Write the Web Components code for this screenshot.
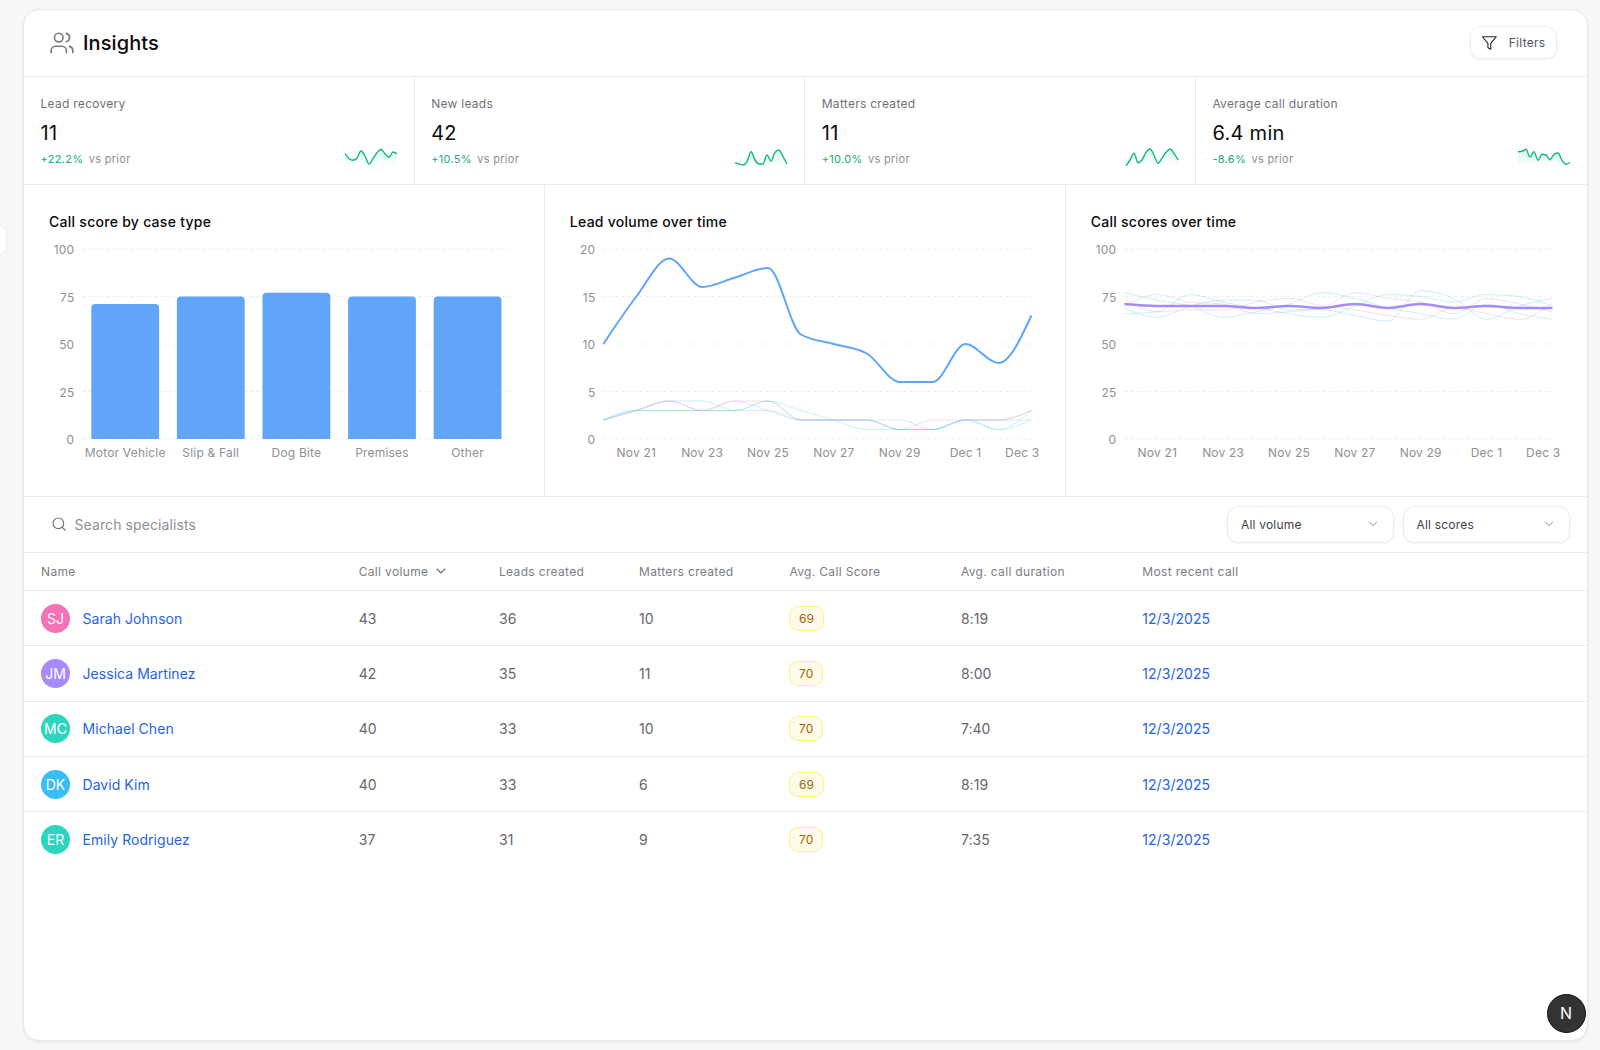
<!DOCTYPE html>
<html lang="en">
<head>
<meta charset="utf-8">
<title>Insights</title>
<style>
  html, body { margin: 0; height: 100%; }
  body { background: #f7f7f7; font-family: Inter, "Liberation Sans", sans-serif; overflow: hidden; }
</style>
</head>
<body>
<side-tab></side-tab>
<insights-page>
  <insights-header slot="header"></insights-header>
  <stat-row slot="stats">
    <stat-card label="Lead recovery" value="11" delta="+22.2%" spark="4.7,9.7,11.3,9,2,7,15,9.7,3.7,0.3,4.7,8.3,3,4.7"></stat-card>
    <stat-card label="New leads" value="42" delta="+10.5%" spark="13.7,15,16,12.7,2.7,11,15,15,6,12,3.3,1,7.7,15"></stat-card>
    <stat-card label="Matters created" value="11" delta="+10.0%" spark="16.7,11,4.3,13.7,11,3.3,0,6,14.3,9.3,3.3,0,4.3,11"></stat-card>
    <stat-card label="Average call duration" value="6.4 min" delta="-8.6%" spark="2.7,2.3,0.3,8,2.7,11.3,5.3,6,10.7,5.3,4,11.3,15.3,13.3"></stat-card>
  </stat-row>
  <chart-row slot="charts">
    <chart-panel heading="Call score by case type"><bar-chart></bar-chart></chart-panel>
    <chart-panel heading="Lead volume over time"><line-chart kind="leads"></line-chart></chart-panel>
    <chart-panel heading="Call scores over time"><line-chart kind="scores"></line-chart></chart-panel>
  </chart-row>
  <search-bar slot="search">
    <select-box label="All volume"></select-box>
    <select-box label="All scores"></select-box>
  </search-bar>
  <specialist-table slot="table">
    <specialist-row name="Sarah Johnson" initials="SJ" color="#f472b6" volume="43" leads="36" matters="10" score="69" duration="8:19" recent="12/3/2025"></specialist-row>
    <specialist-row name="Jessica Martinez" initials="JM" color="#a78bfa" volume="42" leads="35" matters="11" score="70" duration="8:00" recent="12/3/2025"></specialist-row>
    <specialist-row name="Michael Chen" initials="MC" color="#2dd4bf" volume="40" leads="33" matters="10" score="70" duration="7:40" recent="12/3/2025"></specialist-row>
    <specialist-row name="David Kim" initials="DK" color="#38bdf8" volume="40" leads="33" matters="6" score="69" duration="8:19" recent="12/3/2025"></specialist-row>
    <specialist-row name="Emily Rodriguez" initials="ER" color="#2dd4bf" volume="37" leads="31" matters="9" score="70" duration="7:35" recent="12/3/2025"></specialist-row>
  </specialist-table>
</insights-page>
<dev-badge></dev-badge>

<script>
// d3 style monotoneX curve, same shape the charts in the reference use
function monotonePath(pts) {
  const n = pts.length;
  const dx = [], m = [], t = [];
  for (let i = 0; i < n - 1; i++) {
    dx[i] = pts[i + 1][0] - pts[i][0];
    m[i] = (pts[i + 1][1] - pts[i][1]) / dx[i];
  }
  for (let i = 1; i < n - 1; i++) {
    const p = (m[i - 1] * dx[i] + m[i] * dx[i - 1]) / (dx[i - 1] + dx[i]);
    const s = (Math.sign(m[i - 1]) + Math.sign(m[i])) * Math.min(Math.abs(m[i - 1]), Math.abs(m[i]), 0.5 * Math.abs(p));
    t[i] = s || 0;
  }
  t[0] = (3 * m[0] - t[1]) / 2;
  t[n - 1] = (3 * m[n - 2] - t[n - 2]) / 2;
  let d = 'M' + pts[0][0].toFixed(2) + ',' + pts[0][1].toFixed(2);
  for (let i = 0; i < n - 1; i++) {
    const h = dx[i] / 3;
    d += 'C' + (pts[i][0] + h).toFixed(2) + ',' + (pts[i][1] + h * t[i]).toFixed(2) + ' ' +
      (pts[i + 1][0] - h).toFixed(2) + ',' + (pts[i + 1][1] - h * t[i + 1]).toFixed(2) + ' ' +
      pts[i + 1][0].toFixed(2) + ',' + pts[i + 1][1].toFixed(2);
  }
  return d;
}

// plot geometry shared by the three charts
const PLOT = { left: 33.4, right: 461.4, top: 9, bottom: 199, width: 472, height: 232 };
const AXIS_STYLE = `
  :host { display: block; }
  svg { display: block; overflow: visible; }
  text { font: 12px Inter, "Liberation Sans", sans-serif; fill: #8f8f94; letter-spacing: .2px; }
  .grid { stroke: #eeeeee; stroke-dasharray: 3 3; }
`;

function yAxis(ticks, max) {
  return ticks.map(v => {
    const y = PLOT.bottom - (v / max) * (PLOT.bottom - PLOT.top);
    return `<line class="grid" x1="${PLOT.left}" x2="${PLOT.right}" y1="${y}" y2="${y}"/>
      <text x="${PLOT.left - 8}" y="${y + 5}" text-anchor="end">${v}</text>`;
  }).join('');
}

function shadow(el, html) {
  el.attachShadow({ mode: 'open' }).innerHTML = html;
}

class SideTab extends HTMLElement {
  constructor() {
    super();
    shadow(this, `<style>
      :host { position: absolute; left: -10px; top: 225px; width: 16px; height: 30px; background: #fff; border-radius: 8px; box-shadow: 0 0 2px rgba(0,0,0,.1); }
    </style>`);
  }
}

class InsightsPage extends HTMLElement {
  constructor() {
    super();
    shadow(this, `<style>
      :host { display: block; box-sizing: border-box; padding: 9px 12.5px 9px 23px; height: 100%; }
      .card { box-sizing: border-box; height: 100%; background: #fff; border: 1px solid #e8e8e8; border-radius: 16px; box-shadow: 0 1px 3px rgba(0,0,0,.07); overflow: hidden; }
    </style>
    <div class="card">
      <slot name="header"></slot>
      <slot name="stats"></slot>
      <slot name="charts"></slot>
      <slot name="search"></slot>
      <slot name="table"></slot>
    </div>`);
  }
}

class InsightsHeader extends HTMLElement {
  constructor() {
    super();
    shadow(this, `<style>
      :host { display: flex; box-sizing: border-box; height: 67px; align-items: center; justify-content: space-between; padding: 0 30px 0 25px; border-bottom: 1px solid #ebebeb; }
      .title { display: flex; align-items: center; gap: 8px; font-size: 20px; font-weight: 500; letter-spacing: .1px; color: #0a0a0a; }
      .users { width: 26px; height: 26px; color: #7a7a80; }
      button { display: flex; align-items: center; gap: 11.5px; box-sizing: border-box; height: 33px; width: 87px; margin-bottom: 1px; padding: 0 10px; font: 12px Inter, "Liberation Sans", sans-serif; letter-spacing: .3px; color: #52525b; background: #fff; border: 1px solid #ececec; border-radius: 10px; box-shadow: 0 1px 2px rgba(0,0,0,.05); }
      button svg { width: 18px; height: 18px; color: #27272a; }
    </style>
    <div class="title">
      <svg class="users" viewBox="0 0 24 24" fill="none" stroke="currentColor" stroke-width="1.5" stroke-linecap="round" stroke-linejoin="round"><path d="M16 21v-2a4 4 0 0 0-4-4H6a4 4 0 0 0-4 4v2"/><circle cx="9" cy="7" r="4"/><path d="M22 21v-2a4 4 0 0 0-3-3.87"/><path d="M16 3.13a4 4 0 0 1 0 7.75"/></svg>
      <span>Insights</span>
    </div>
    <button>
      <svg viewBox="0 0 24 24" fill="none" stroke="currentColor" stroke-width="1.6" stroke-linecap="round" stroke-linejoin="round"><polygon points="22 3 2 3 10 12.46 10 19 14 21 14 12.46 22 3"/></svg>
      <span>Filters</span>
    </button>`);
  }
}

class StatRow extends HTMLElement {
  constructor() {
    super();
    shadow(this, `<style>
      :host { display: grid; grid-template-columns: repeat(4, 1fr); height: 108px; box-sizing: border-box; border-bottom: 1px solid #ebebeb; }
    </style><slot></slot>`);
  }
}

class StatCard extends HTMLElement {
  constructor() {
    super();
    const ys = this.getAttribute('spark').split(',').map(Number);
    const pts = ys.map((y, i) => [1 + i * 4, y + 1]);
    const line = monotonePath(pts);
    const id = 'g' + Math.random().toString(36).slice(2);
    shadow(this, `<style>
      :host { display: flex; justify-content: space-between; align-items: flex-end; box-sizing: border-box; padding: 19px 16px 18px 16.5px; border-right: 1px solid #ebebeb; }
      :host(:last-child) { border-right: 0; }
      .label { font-size: 12px; line-height: 16px; letter-spacing: .28px; color: #71717a; }
      .value { font-size: 20px; line-height: 28px; margin-top: 7px; letter-spacing: .3px; color: #0a0a0a; }
      .delta { font-size: 11px; line-height: 14px; margin-top: 5px; letter-spacing: .3px; color: #8f8f94; }
      .delta b { font-weight: 400; color: #1aa874; margin-right: 2px; }
      svg { display: block; width: 54px; height: 18px; overflow: visible; }
    </style>
    <div>
      <div class="label">${this.getAttribute('label')}</div>
      <div class="value">${this.getAttribute('value')}</div>
      <div class="delta"><b>${this.getAttribute('delta')}</b> vs prior</div>
    </div>
    <svg viewBox="0 0 54 18">
      <defs><linearGradient id="${id}" x1="0" y1="0" x2="0" y2="1"><stop offset="0" stop-color="#10b981" stop-opacity=".16"/><stop offset="1" stop-color="#10b981" stop-opacity="0"/></linearGradient></defs>
      <path d="${line}L53,18L1,18Z" fill="url(#${id})"/>
      <path d="${line}" fill="none" stroke="#10b981" stroke-width="1.4"/>
    </svg>`);
  }
}

class ChartRow extends HTMLElement {
  constructor() {
    super();
    shadow(this, `<style>
      :host { display: grid; grid-template-columns: repeat(3, 1fr); height: 312px; box-sizing: border-box; border-bottom: 1px solid #ebebeb; }
    </style><slot></slot>`);
  }
}

class ChartPanel extends HTMLElement {
  constructor() {
    super();
    shadow(this, `<style>
      :host { display: block; box-sizing: border-box; padding: 27px 0 0 25px; border-right: 1px solid #ebebeb; }
      :host(:last-child) { border-right: 0; }
      h3 { margin: 0 0 8px; font-size: 14px; line-height: 20px; font-weight: 500; letter-spacing: .27px; color: #0a0a0a; }
    </style>
    <h3>${this.getAttribute('heading')}</h3>
    <slot></slot>`);
  }
}

class BarChart extends HTMLElement {
  constructor() {
    super();
    const data = [['Motor Vehicle', 71], ['Slip & Fall', 75], ['Dog Bite', 77], ['Premises', 75], ['Other', 75]];
    const band = (PLOT.right - PLOT.left) / data.length;
    const unit = (PLOT.bottom - PLOT.top) / 100;
    const bars = data.map(([name, v], i) => {
      const cx = PLOT.left + band * (i + .5);
      const top = PLOT.bottom - v * unit;
      const l = cx - 33.9, r = cx + 33.9;
      return `<path d="M${l},${PLOT.bottom}V${top + 4}Q${l},${top} ${l + 4},${top}H${r - 4}Q${r},${top} ${r},${top + 4}V${PLOT.bottom}Z" fill="#60a5fa"/>
        <text x="${cx}" y="${PLOT.bottom + 18}" text-anchor="middle">${name.replace('&', '&amp;')}</text>`;
    }).join('');
    shadow(this, `<style>${AXIS_STYLE}</style>
      <svg width="${PLOT.width}" height="${PLOT.height}">${yAxis([0, 25, 50, 75, 100], 100)}${bars}</svg>`);
  }
}

const LINE_DATA = {
  leads: {
    max: 20, ticks: [0, 5, 10, 15, 20], stroke: '#60a5fa', weight: 2,
    main: [10, 15, 19, 16, 17, 18, 11, 10, 9, 6, 6, 10, 8, 13],
    rest: [
      ['#2dd4bf', [2, 3, 3, 3, 3, 4, 3, 2, 1, 1, 1, 2, 1, 2]],
      ['#2dd4bf', [2, 3, 3, 3, 3, 3, 2, 2, 2, 1, 1, 2, 1, 3]],
      ['#f472b6', [2, 3, 4, 3, 4, 4, 2, 2, 2, 1, 2, 2, 2, 3]],
      ['#a78bfa', [2, 3, 4, 3, 4, 3, 2, 2, 2, 2, 1, 2, 2, 3]],
      ['#38bdf8', [2, 3, 4, 4, 3, 4, 2, 2, 2, 1, 1, 2, 2, 2]]
    ]
  },
  scores: {
    max: 100, ticks: [0, 25, 50, 75, 100], stroke: '#a78bfa', weight: 2.5,
    main: [71, 70, 70, 70, 69, 70, 69, 71, 69, 71, 69, 70, 69, 69],
    rest: [
      ['#2dd4bf', [77, 73, 70, 64, 67, 71, 77, 74, 69, 66, 63, 71, 66, 63]],
      ['#2dd4bf', [66, 67, 76, 72, 69, 66, 64, 70, 76, 75, 72, 76, 75, 70]],
      ['#f472b6', [74, 67, 68, 68, 72, 74, 70, 68, 65, 63, 69, 66, 63, 72]],
      ['#a78bfa', [70, 76, 72, 71, 66, 67, 69, 77, 74, 72, 66, 74, 71, 67]],
      ['#38bdf8', [69, 64, 70, 73, 73, 68, 68, 65, 62, 78, 74, 63, 70, 74]]
    ]
  }
};
const DAY_TICKS = [[1, 'Nov 21'], [3, 'Nov 23'], [5, 'Nov 25'], [7, 'Nov 27'], [9, 'Nov 29'], [11, 'Dec 1']];

class LineChart extends HTMLElement {
  constructor() {
    super();
    const cfg = LINE_DATA[this.getAttribute('kind')];
    const step = (PLOT.right - PLOT.left) / 13;
    const unit = (PLOT.bottom - PLOT.top) / cfg.max;
    const toPts = vals => vals.map((v, i) => [PLOT.left + i * step, PLOT.bottom - v * unit]);
    const rest = cfg.rest.map(([c, vals]) =>
      `<path d="${monotonePath(toPts(vals))}" fill="none" stroke="${c}" stroke-opacity=".26" stroke-width="1"/>`).join('');
    const ticks = DAY_TICKS.map(([i, t]) =>
      `<text x="${PLOT.left + i * step}" y="${PLOT.bottom + 18}" text-anchor="middle">${t}</text>`).join('');
    shadow(this, `<style>${AXIS_STYLE}</style>
      <svg width="${PLOT.width}" height="${PLOT.height}">
        ${yAxis(cfg.ticks, cfg.max)}${rest}
        <path d="${monotonePath(toPts(cfg.main))}" fill="none" stroke="${cfg.stroke}" stroke-width="${cfg.weight}"/>
        ${ticks}
        <text x="${PLOT.right + 8}" y="${PLOT.bottom + 18}" text-anchor="end">Dec 3</text>
      </svg>`);
  }
}

class SearchBar extends HTMLElement {
  constructor() {
    super();
    shadow(this, `<style>
      :host { display: flex; align-items: center; justify-content: space-between; box-sizing: border-box; height: 55.5px; padding: 0 17px 0 27px; border-bottom: 1px solid #ebebeb; }
      .search { display: flex; align-items: center; gap: 7.5px; font-size: 14px; letter-spacing: .1px; color: #8f8f94; }
      .search svg { width: 16px; height: 16px; color: #71717a; }
      .filters { display: flex; gap: 8.5px; }
    </style>
    <div class="search">
      <svg viewBox="0 0 24 24" fill="none" stroke="currentColor" stroke-width="1.8" stroke-linecap="round" stroke-linejoin="round"><circle cx="11" cy="11" r="8"/><path d="m21 21-4.3-4.3"/></svg>
      <span>Search specialists</span>
    </div>
    <div class="filters"><slot></slot></div>`);
  }
}

class SelectBox extends HTMLElement {
  constructor() {
    super();
    shadow(this, `<style>
      :host { display: flex; align-items: center; justify-content: space-between; box-sizing: border-box; width: 167px; height: 37px; padding: 0 13px; font-size: 12px; letter-spacing: .2px; color: #3f3f46; background: #fff; border: 1px solid #ececec; border-radius: 11px; box-shadow: 0 1px 2px rgba(0,0,0,.05); }
      svg { width: 14px; height: 14px; color: #a1a1aa; }
    </style>
    <span>${this.getAttribute('label')}</span>
    <svg viewBox="0 0 24 24" fill="none" stroke="currentColor" stroke-width="1.8" stroke-linecap="round" stroke-linejoin="round"><path d="m6 9 6 6 6-6"/></svg>`);
  }
}

const TABLE_COLS = 'grid-template-columns: 317.7px 140.3px 140px 150.4px 171.5px 181.4px 1fr;';

class SpecialistTable extends HTMLElement {
  constructor() {
    super();
    shadow(this, `<style>
      :host { display: block; }
      .head { display: grid; ${TABLE_COLS} align-items: center; box-sizing: border-box; height: 38.5px; padding-left: 17px; font-size: 12px; letter-spacing: .34px; color: #7c7c82; border-bottom: 1px solid #ebebeb; }
      .sort { display: flex; align-items: center; gap: 5px; }
      svg { width: 16px; height: 16px; color: #71717a; }
    </style>
    <div class="head">
      <span>Name</span>
      <span class="sort">Call volume <svg viewBox="0 0 24 24" fill="none" stroke="currentColor" stroke-width="1.6" stroke-linecap="round" stroke-linejoin="round"><path d="m6 9 6 6 6-6"/></svg></span>
      <span>Leads created</span>
      <span>Matters created</span>
      <span>Avg. Call Score</span>
      <span>Avg. call duration</span>
      <span>Most recent call</span>
    </div>
    <slot></slot>`);
  }
}

class SpecialistRow extends HTMLElement {
  constructor() {
    super();
    const a = n => this.getAttribute(n);
    shadow(this, `<style>
      :host { display: grid; ${TABLE_COLS} align-items: center; box-sizing: border-box; height: 55.3px; padding-left: 17px; font-size: 14px; letter-spacing: .05px; color: #66666c; border-bottom: 1px solid #ebebeb; }
      :host(:last-child) { border-bottom: 0; }
      .who { display: flex; align-items: center; gap: 12.5px; }
      .avatar { display: flex; align-items: center; justify-content: center; width: 29px; height: 29px; border-radius: 50%; color: #fff; letter-spacing: 0; }
      a { color: #2563eb; text-decoration: none; }
      .score { display: inline-flex; align-items: center; height: 25px; box-sizing: border-box; padding: 0 8.5px; font-size: 12px; font-weight: 400; letter-spacing: .2px; color: #a16207; background: #fefce8; border: 1px solid #fef08a; border-radius: 9px; }
    </style>
    <div class="who"><span class="avatar" style="background:${a('color')}">${a('initials')}</span><a>${a('name')}</a></div>
    <span>${a('volume')}</span>
    <span>${a('leads')}</span>
    <span>${a('matters')}</span>
    <span><span class="score">${a('score')}</span></span>
    <span>${a('duration')}</span>
    <a>${a('recent')}</a>`);
  }
}

class DevBadge extends HTMLElement {
  constructor() {
    super();
    shadow(this, `<style>
      :host { position: absolute; left: 1546.5px; top: 993.5px; width: 39px; height: 39px; box-sizing: border-box; display: flex; align-items: center; justify-content: center; background: #333; border: 1px solid #111; border-radius: 50%; color: #fff; font-size: 16px; }
    </style><span>N</span>`);
  }
}

customElements.define('side-tab', SideTab);
customElements.define('insights-page', InsightsPage);
customElements.define('insights-header', InsightsHeader);
customElements.define('stat-row', StatRow);
customElements.define('stat-card', StatCard);
customElements.define('chart-row', ChartRow);
customElements.define('chart-panel', ChartPanel);
customElements.define('bar-chart', BarChart);
customElements.define('line-chart', LineChart);
customElements.define('search-bar', SearchBar);
customElements.define('select-box', SelectBox);
customElements.define('specialist-table', SpecialistTable);
customElements.define('specialist-row', SpecialistRow);
customElements.define('dev-badge', DevBadge);
</script>
</body>
</html>
